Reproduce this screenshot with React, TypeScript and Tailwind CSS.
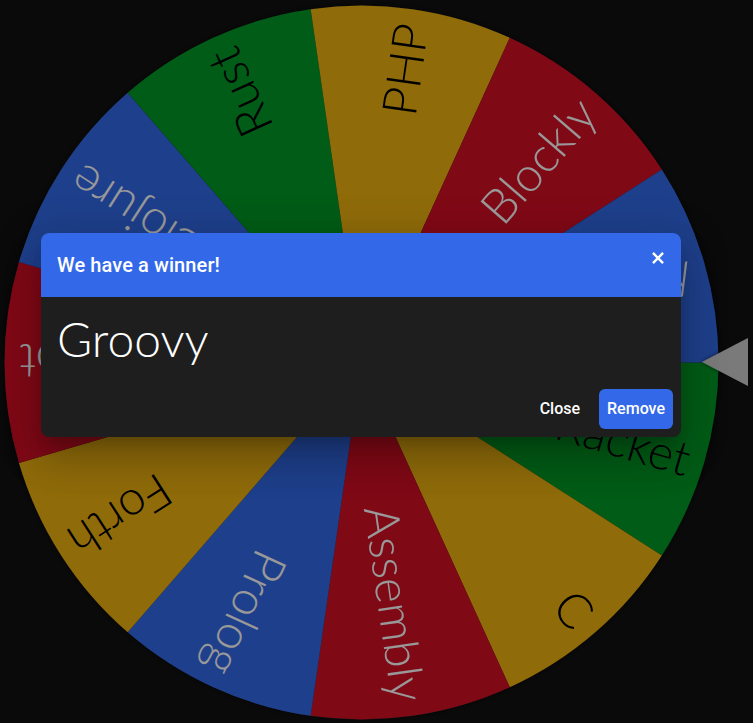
import React from "react";

const CX = 361.5;
const CY = 362.5;
const R = 357;

type Seg = { label: string; color: string; text: string };

const GREEN = "#009925";
const YELLOW = "#eeb211";
const RED = "#d50f25";
const BLUE = "#3369e8";

const segments: Seg[] = [
  { label: "Racket", color: GREEN, text: "#000000" },
  { label: "C", color: YELLOW, text: "#000000" },
  { label: "Assembly", color: RED, text: "#ffffff" },
  { label: "Prolog", color: BLUE, text: "#ffffff" },
  { label: "Forth", color: YELLOW, text: "#000000" },
  { label: "JavaScript", color: RED, text: "#ffffff" },
  { label: "Clojure", color: BLUE, text: "#ffffff" },
  { label: "Rust", color: GREEN, text: "#000000" },
  { label: "PHP", color: YELLOW, text: "#000000" },
  { label: "Blockly", color: RED, text: "#ffffff" },
  { label: "Groovy", color: BLUE, text: "#ffffff" },
];

function Wheel() {
  const n = segments.length;
  const step = 360 / n;
  const rad = (d: number) => (d * Math.PI) / 180;
  return (
    <svg width={753} height={723} viewBox="0 0 753 723" className="block">
      <defs>
        <filter id="wheelShadow" x="-10%" y="-10%" width="120%" height="120%">
          <feDropShadow dx="0" dy="0" stdDeviation="4" floodColor="#000" floodOpacity="0.6" />
        </filter>
        <filter id="ptrShadow" x="-30%" y="-30%" width="160%" height="160%">
          <feDropShadow dx="0" dy="0" stdDeviation="2" floodColor="#000" floodOpacity="0.6" />
        </filter>
      </defs>
      <circle cx={CX} cy={CY} r={R} fill="#222" filter="url(#wheelShadow)" />
      {segments.map((s, i) => {
        const a0 = rad(i * step);
        const a1 = rad((i + 1) * step);
        const x0 = CX + R * Math.cos(a0);
        const y0 = CY + R * Math.sin(a0);
        const x1 = CX + R * Math.cos(a1);
        const y1 = CY + R * Math.sin(a1);
        return (
          <path
            key={s.label}
            d={`M ${CX} ${CY} L ${x0} ${y0} A ${R} ${R} 0 0 1 ${x1} ${y1} Z`}
            fill={s.color}
          />
        );
      })}
      {segments.map((s, i) => {
        const mid = (i + 0.5) * step;
        return (
          <text
            key={s.label + "-t"}
            x={CX + 342}
            y={CY}
            textAnchor="end"
            dominantBaseline="central"
            transform={`rotate(${mid} ${CX} ${CY})`}
            fontSize={48}
            fontWeight={300}
            fontFamily="Lato, 'Open Sans', sans-serif"
            fill={s.text}
          >
            {s.label}
          </text>
        );
      })}
      <polygon points="702,362 748,338 748,386" fill="#cccccc" filter="url(#ptrShadow)" />
    </svg>
  );
}

export default function App() {
  return (
    <div className="relative w-[753px] h-[723px] overflow-hidden bg-[#121212]">
      <Wheel />
      <div className="absolute inset-0 bg-black/40" />
      <div className="absolute left-[41px] top-[233px] w-[640px] rounded-lg overflow-hidden bg-[#1e1e1e] shadow-[0_11px_15px_-7px_rgba(0,0,0,0.2),0_24px_38px_3px_rgba(0,0,0,0.14),0_9px_46px_8px_rgba(0,0,0,0.12)]">
        <div className="relative h-16 bg-[#3369e8] flex items-center px-4">
          <span className="text-white text-[20px] font-medium font-['Roboto',sans-serif] tracking-[0.1px]">
            We have a winner!
          </span>
          <button className="absolute right-[12px] top-[14px] w-[22px] h-[22px] flex items-center justify-center">
            <svg width="22" height="22" viewBox="0 0 24 24">
              <path d="M6.5 6.5 L17.5 17.5 M17.5 6.5 L6.5 17.5" stroke="#ffffff" strokeWidth="2.6" strokeLinecap="butt" />
            </svg>
          </button>
        </div>
        <div className="px-4 pt-[18px] pb-[26px]">
          <div className="text-white text-[48px] leading-[48px] font-light font-['Lato','Open_Sans',sans-serif]">
            Groovy
          </div>
        </div>
        <div className="flex justify-end items-center gap-[11px] pr-2 pb-2">
          <button className="h-10 px-2 rounded-md text-white text-[16px] font-medium font-['Roboto',sans-serif]">
            Close
          </button>
          <button className="h-10 px-2 rounded-md bg-[#3369e8] text-white text-[16px] font-medium font-['Roboto',sans-serif]">
            Remove
          </button>
        </div>
      </div>
    </div>
  );
}
